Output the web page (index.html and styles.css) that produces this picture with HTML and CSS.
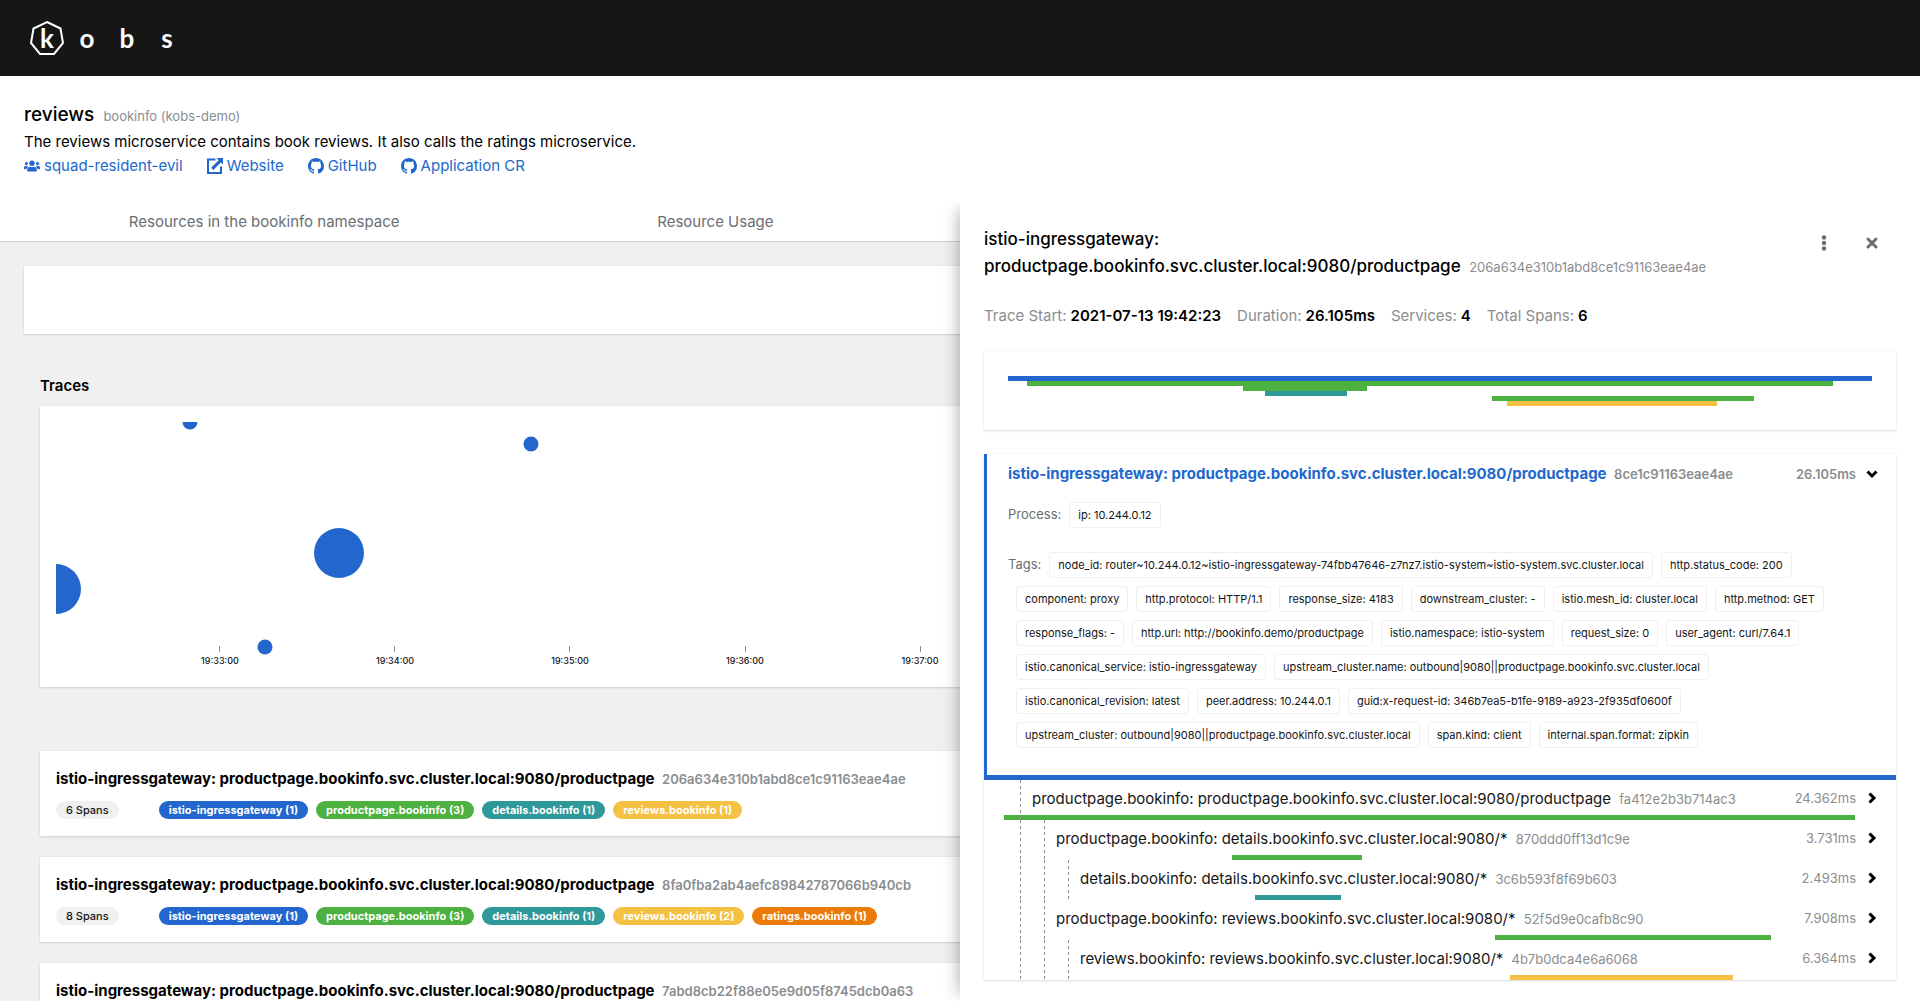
FILE: index.html
```html
<!DOCTYPE html>
<html lang="en">
<head>
<meta charset="utf-8">
<meta name="viewport" content="width=device-width, initial-scale=1">
<title>kobs - reviews</title>
<link rel="stylesheet" href="styles.css">
</head>
<body>
<svg class="defs" aria-hidden="true">
  <symbol id="github" viewBox="0 0 16 16"><path d="M8 0C3.58 0 0 3.58 0 8c0 3.54 2.29 6.53 5.47 7.59.4.07.55-.17.55-.38 0-.19-.01-.82-.01-1.49-2.01.37-2.53-.49-2.69-.94-.09-.23-.48-.94-.82-1.13-.28-.15-.68-.52-.01-.53.63-.01 1.08.58 1.23.82.72 1.21 1.87.87 2.33.66.07-.52.28-.87.51-1.07-1.78-.2-3.64-.89-3.64-3.95 0-.87.31-1.59.82-2.15-.08-.2-.36-1.02.08-2.12 0 0 .67-.21 2.2.82.64-.18 1.32-.27 2-.27.68 0 1.36.09 2 .27 1.53-1.04 2.2-.82 2.2-.82.44 1.1.16 1.92.08 2.12.51.56.82 1.27.82 2.15 0 3.07-1.87 3.75-3.65 3.95.29.25.54.73.54 1.48 0 1.07-.01 1.93-.01 2.2 0 .21.15.46.55.38A8.013 8.013 0 0016 8c0-4.42-3.58-8-8-8z"/></symbol>
  <symbol id="users" viewBox="0 0 640 512"><path d="M96 224c35.3 0 64-28.7 64-64s-28.7-64-64-64-64 28.700-64 64 28.700 64 64 64zm448 0c35.300 0 64-28.700 64-64s-28.700-64-64-64-64 28.700-64 64 28.700 64 64 64zm32 32h-64c-17.600 0-33.500 7.100-45.100 18.600 40.300 22.100 68.900 62 75.100 109.400h66c17.700 0 32-14.300 32-32v-32c0-35.300-28.700-64-64-64zm-256 0c61.900 0 112-50.100 112-112S381.900 32 320 32 208 82.100 208 144s50.100 112 112 112zm76.800 32h-8.300c-20.800 10-43.900 16-68.500 16s-47.600-6-68.500-16h-8.300C179.600 288 128 339.600 128 403.200V432c0 26.500 21.500 48 48 48h288c26.500 0 48-21.500 48-48v-28.800c0-63.600-51.600-115.200-115.200-115.200zm-223.700-13.400C161.500 263.100 145.600 256 128 256H64c-35.300 0-64 28.700-64 64v32c0 17.700 14.300 32 32 32h65.900c6.300-47.400 34.900-87.300 75.200-109.400z"/></symbol>
  <symbol id="external" viewBox="0 0 16 16"><path d="M8.500 1.500H1v13.500h13V8.500" fill="none" stroke="currentColor" stroke-width="2"/><path d="M9.500 0H16v6.500l-2.100-2.100-7.600 7.500-2.200-2.200 7.500-7.500z"/></symbol>
  <symbol id="chevron" viewBox="0 0 8 12"><path d="M1.500 1.500 6 6 1.500 10.500" fill="none" stroke="currentColor" stroke-width="3"/></symbol>
  <symbol id="chevron-down" viewBox="0 0 12 8"><path d="M1.500 1.500 6 6 10.500 1.500" fill="none" stroke="currentColor" stroke-width="3"/></symbol>
</svg>

<header class="masthead">
  <a class="brand" href="#" aria-label="kobs">
    <span class="brand-mark">
      <svg viewBox="0 0 36 36" aria-hidden="true"><path d="M18 2 31.500 8.500 34 23 25 34H11L2 23 4.500 8.500z" fill="none" stroke="currentColor" stroke-width="2"/></svg>
      <span>k</span>
    </span>
    <span>o</span><span>b</span><span>s</span>
  </a>
</header>

<section class="intro">
  <h1 class="title">reviews <small>bookinfo (kobs-demo)</small></h1>
  <p>The reviews microservice contains book reviews. It also calls the ratings microservice.</p>
  <nav class="links">
    <a href="#"><svg class="icon"><use href="#users"/></svg>squad-resident-evil</a>
    <a href="#"><svg class="icon"><use href="#external"/></svg>Website</a>
    <a href="#"><svg class="icon"><use href="#github"/></svg>GitHub</a>
    <a href="#"><svg class="icon"><use href="#github"/></svg>Application CR</a>
  </nav>
</section>

<div class="drawer">
  <main class="content">
    <div class="tabs">
      <div class="tab-list">
        <button type="button">Resources in the bookinfo namespace</button>
        <button type="button">Resource Usage</button>
      </div>
    </div>
    <div class="page">
      <div class="card toolbar"></div>
      <div class="section">
        <h2>Traces</h2>
        <div class="card chart">
          <svg class="plot" role="img" aria-label="Traces by start time">
            <g class="dots">
              <circle cx="0" cy="167" r="25"/>
              <circle cx="134" cy="0" r="7.500"/>
              <circle cx="475" cy="22" r="7.500"/>
              <circle cx="283" cy="131" r="25"/>
              <circle cx="209" cy="225" r="7.500"/>
            </g>
            <path class="ticks" d="M163.500 224v6M338.500 224v6M513.500 224v6M689.500 224v6M864.500 224v6"/>
            <g class="times">
              <text x="164" y="242">19:33:00</text>
              <text x="339" y="242">19:34:00</text>
              <text x="514" y="242">19:35:00</text>
              <text x="689" y="242">19:36:00</text>
              <text x="864" y="242">19:37:00</text>
            </g>
          </svg>
        </div>
        <div class="traces">
          <article class="card trace">
            <h3>istio-ingressgateway: productpage.bookinfo.svc.cluster.local:9080/productpage <small>206a634e310b1abd8ce1c91163eae4ae</small></h3>
            <div class="badges"><span class="badge count">6 Spans</span><span class="badge blue">istio-ingressgateway (1)</span><span class="badge green">productpage.bookinfo (3)</span><span class="badge teal">details.bookinfo (1)</span><span class="badge gold">reviews.bookinfo (1)</span></div>
          </article>
          <article class="card trace">
            <h3>istio-ingressgateway: productpage.bookinfo.svc.cluster.local:9080/productpage <small>8fa0fba2ab4aefc89842787066b940cb</small></h3>
            <div class="badges"><span class="badge count">8 Spans</span><span class="badge blue">istio-ingressgateway (1)</span><span class="badge green">productpage.bookinfo (3)</span><span class="badge teal">details.bookinfo (1)</span><span class="badge gold">reviews.bookinfo (2)</span><span class="badge orange">ratings.bookinfo (1)</span></div>
          </article>
          <article class="card trace">
            <h3>istio-ingressgateway: productpage.bookinfo.svc.cluster.local:9080/productpage <small>7abd8cb22f88e05e9d05f8745dcb0a63</small></h3>
          </article>
        </div>
      </div>
    </div>
  </main>

  <aside class="panel">
    <div class="panel-head">
      <h2 class="title">istio-ingressgateway: <span class="operation">productpage.bookinfo.svc.cluster.local:9080/productpage <small>206a634e310b1abd8ce1c91163eae4ae</small></span></h2>
      <div class="actions">
        <button type="button" aria-label="Actions"><svg viewBox="0 0 16 16"><circle cx="8" cy="2.500" r="2.200"/><circle cx="8" cy="8" r="2.200"/><circle cx="8" cy="13.500" r="2.200"/></svg></button>
        <button type="button" aria-label="Close"><svg viewBox="0 0 16 16"><path d="m4 4 8 8M12 4l-8 8" fill="none" stroke="currentColor" stroke-width="3" stroke-linecap="round"/></svg></button>
      </div>
    </div>

    <dl class="facts">
      <div><dt>Trace Start:</dt><dd>2021-07-13 19:42:23</dd></div>
      <div><dt>Duration:</dt><dd>26.105ms</dd></div>
      <div><dt>Services:</dt><dd>4</dd></div>
      <div><dt>Total Spans:</dt><dd>6</dd></div>
    </dl>

    <div class="card overview">
      <div class="bar blue" style="margin-left:0;width:100%"></div>
      <div class="bar green" style="margin-left:2.2%;width:93.3%"></div>
      <div class="bar green" style="margin-left:27.2%;width:14.3%"></div>
      <div class="bar teal" style="margin-left:29.7%;width:9.5%"></div>
      <div class="bar green" style="margin-left:56%;width:30.3%"></div>
      <div class="bar gold" style="margin-left:57.7%;width:24.4%"></div>
    </div>

    <div class="card spans">
      <section class="span-open">
        <button type="button" class="span-row">
          <span class="name">istio-ingressgateway: productpage.bookinfo.svc.cluster.local:9080/productpage <small>8ce1c91163eae4ae</small></span>
          <span class="duration">26.105ms</span><svg class="chevron"><use href="#chevron-down"/></svg>
        </button>
        <div class="details">
          <div class="chips"><span class="label">Process:</span><span class="chip">ip: 10.244.0.12</span></div>
          <div class="chips"><span class="label">Tags:</span><span class="chip">node_id: router~10.244.0.12~istio-ingressgateway-74fbb47646-z7nz7.istio-system~istio-system.svc.cluster.local</span><span class="chip">http.status_code: 200</span><span class="chip">component: proxy</span><span class="chip">http.protocol: HTTP/1.1</span><span class="chip">response_size: 4183</span><span class="chip">downstream_cluster: -</span><span class="chip">istio.mesh_id: cluster.local</span><span class="chip">http.method: GET</span><span class="chip">response_flags: -</span><span class="chip">http.url: http://bookinfo.demo/productpage</span><span class="chip">istio.namespace: istio-system</span><span class="chip">request_size: 0</span><span class="chip">user_agent: curl/7.64.1</span><span class="chip">istio.canonical_service: istio-ingressgateway</span><span class="chip">upstream_cluster.name: outbound|9080||productpage.bookinfo.svc.cluster.local</span><span class="chip">istio.canonical_revision: latest</span><span class="chip">peer.address: 10.244.0.1</span><span class="chip">guid:x-request-id: 346b7ea5-b1fe-9189-a923-2f935df0600f</span><span class="chip">upstream_cluster: outbound|9080||productpage.bookinfo.svc.cluster.local</span><span class="chip">span.kind: client</span><span class="chip">internal.span.format: zipkin</span></div>
        </div>
        <div class="bar blue"></div>
      </section>
      <div class="span">
        <button type="button" class="span-row"><i class="guide"></i><span class="name">productpage.bookinfo: productpage.bookinfo.svc.cluster.local:9080/productpage <small>fa412e2b3b714ac3</small></span><span class="duration">24.362ms</span><svg class="chevron"><use href="#chevron"/></svg></button>
        <div class="bar green" style="margin-left:2.2%;width:93.3%"></div>
      </div>
      <div class="span">
        <button type="button" class="span-row"><i class="guide"></i><i class="guide"></i><span class="name">productpage.bookinfo: details.bookinfo.svc.cluster.local:9080/* <small>870ddd0ff13d1c9e</small></span><span class="duration">3.731ms</span><svg class="chevron"><use href="#chevron"/></svg></button>
        <div class="bar green" style="margin-left:27.2%;width:14.3%"></div>
      </div>
      <div class="span">
        <button type="button" class="span-row"><i class="guide"></i><i class="guide"></i><i class="guide"></i><span class="name">details.bookinfo: details.bookinfo.svc.cluster.local:9080/* <small>3c6b593f8f69b603</small></span><span class="duration">2.493ms</span><svg class="chevron"><use href="#chevron"/></svg></button>
        <div class="bar teal" style="margin-left:29.7%;width:9.5%"></div>
      </div>
      <div class="span">
        <button type="button" class="span-row"><i class="guide"></i><i class="guide"></i><span class="name">productpage.bookinfo: reviews.bookinfo.svc.cluster.local:9080/* <small>52f5d9e0cafb8c90</small></span><span class="duration">7.908ms</span><svg class="chevron"><use href="#chevron"/></svg></button>
        <div class="bar green" style="margin-left:56%;width:30.3%"></div>
      </div>
      <div class="span">
        <button type="button" class="span-row"><i class="guide"></i><i class="guide"></i><i class="guide"></i><span class="name">reviews.bookinfo: reviews.bookinfo.svc.cluster.local:9080/* <small>4b7b0dca4e6a6068</small></span><span class="duration">6.364ms</span><svg class="chevron"><use href="#chevron"/></svg></button>
        <div class="bar gold" style="margin-left:57.7%;width:24.4%"></div>
      </div>
    </div>
  </aside>
</div>
</body>
</html>
```
FILE: styles.css
```css
* { box-sizing: border-box; margin: 0; padding: 0; }

body {
  display: flex;
  flex-direction: column;
  height: 100vh;
  overflow: hidden;
  background: #fff;
  color: #151515;
  font: 15px/24px Inter, "Liberation Sans", sans-serif;
}

button { border: 0; background: none; color: inherit; font: inherit; cursor: pointer; }
a { color: #2168ce; text-decoration: none; }
small { margin-left: 4px; color: #8a8d90; font-size: 13px; line-height: 16px; }
.defs { position: absolute; width: 0; height: 0; }

/* Masthead */
.masthead { flex: none; display: flex; align-items: center; height: 76px; padding: 0 27px; background: #161616; }
.brand { display: flex; align-items: center; color: #fff; font: 700 26px/32px Lato, sans-serif; }
.brand > span { display: flex; justify-content: center; width: 40px; }
.brand-mark { position: relative; }
.brand-mark svg { position: absolute; top: -2px; left: 2px; width: 36px; height: 36px; }

/* Application header */
.intro { flex: none; padding: 24px; color: #000; }
.title { color: #000; font-size: 17px; font-weight: 500; line-height: 27px; }
.title small { font-weight: 400; }
.intro .title { font-size: 19px; line-height: 30px; }
.links { display: flex; gap: 24px; }
.links a { display: flex; align-items: center; gap: 4px; }
.icon { width: 16px; height: 16px; fill: currentColor; }

/* Drawer */
.drawer { position: relative; flex: 1; min-height: 0; overflow: hidden; }
.tabs { height: 40px; border-bottom: 1px solid #d2d2d2; }
.tab-list { display: flex; width: 47%; }
.tab-list button { flex: 1 1 auto; padding: 8px 0; color: #6a6e73; }
.page { padding: 24px; background: #f0f0f0; }
.card { background: #fff; box-shadow: 0 1px 2px rgba(3, 3, 3, .12), 0 0 2px rgba(3, 3, 3, .06); }
.toolbar { height: 68px; }
.section { padding: 40px 16px 0; color: #000; }
.section h2 { padding-bottom: 8px; font-size: 15px; font-weight: 600; }
.chart { padding: 16px; }
.plot { display: block; width: 100%; height: 249px; overflow: hidden; }
.dots { fill: #2367ce; }
.ticks { stroke: #8a8d90; }
.times { fill: #151515; font-size: 9px; font-weight: 500; text-anchor: middle; }
.traces { display: flex; flex-direction: column; gap: 21px; margin-top: 64px; }
.trace { padding: 16px 16px 17px; }
.trace h3 { font-size: 15px; font-weight: 700; white-space: nowrap; }
.trace small { font-weight: 600; }
.badges { display: flex; gap: 8px; margin-top: 10px; }
.badge { padding: 0 10px; border-radius: 9px; color: #fff; font-size: 11px; font-weight: 700; line-height: 18px; }
.badge.count { margin-right: 32px; background: #f0f0f0; color: #151515; font-weight: 500; }
.blue { background: #2367ce; }
.green { background: #4cb140; }
.teal { background: #2f9899; }
.gold { background: #f4c145; }
.orange { background: #ec7a08; }

/* Detail panel */
.panel {
  position: absolute;
  inset: 0 0 0 auto;
  width: 50%;
  padding: 24px;
  background: #fff;
  box-shadow: -8px 0 16px -8px rgba(3, 3, 3, .36);
}
.panel-head { display: flex; justify-content: space-between; gap: 24px; }
.operation { white-space: nowrap; }
.actions { display: flex; gap: 16px; height: 34px; padding-right: 8px; color: #6a6e73; }
.actions button { display: flex; align-items: center; justify-content: center; width: 32px; }
.actions svg { width: 16px; height: 16px; fill: currentColor; }
.facts { display: flex; gap: 16px; margin: 24px 0; }
.facts div { display: flex; gap: 4px; }
.facts dt { color: #8a8d90; }
.facts dd { color: #000; font-weight: 600; }
.bar { height: 5px; }
.overview { padding: 24px; }

.spans { margin-top: 24px; }
.span-open > .span-row, .details { border-left: 3px solid #2367ce; }
.span-row { display: flex; align-items: center; width: 100%; height: 35px; padding: 0 18px 0 13px; text-align: left; white-space: nowrap; }
.span-open > .span-row { height: 40px; padding-left: 21px; color: #2168ce; font-weight: 700; }
.name { flex: 1; margin-left: 11px; padding-top: 2px; }
.span-open .name { margin-left: 0; padding-top: 0; }
.duration { color: #8a8d90; font-size: 13px; font-weight: 400; }
.span-open small, .span-open .duration { font-weight: 600; }
.chevron { width: 12px; height: 12px; margin-left: 10px; color: #000; }
.guide { align-self: stretch; width: 24px; height: 40px; margin-bottom: -5px; background: repeating-linear-gradient(#8a8d90 0 3px, transparent 3px 6px) right / 1px 100% no-repeat; }
.details { display: flex; flex-direction: column; gap: 24px; padding: 8px 24px 27px 21px; }
.chips { display: flex; flex-wrap: wrap; row-gap: 8px; }
.label { color: #6a6e73; font-size: 13px; }
.chip { margin-left: 8px; padding: 0 8px; border: 1px solid #f0f0f0; border-radius: 3px; font-size: 11px; line-height: 24px; }
```
